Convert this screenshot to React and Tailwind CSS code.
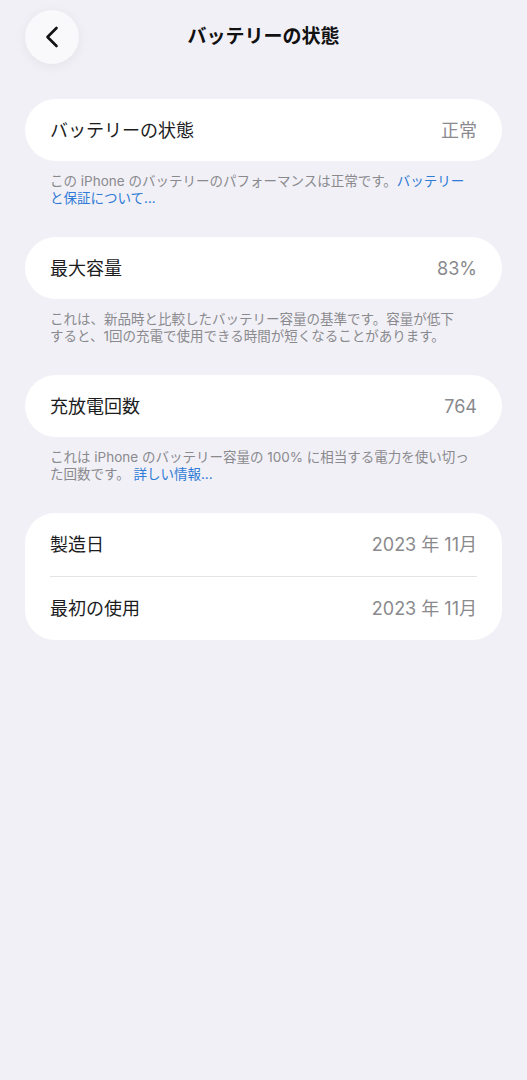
import React from 'react';

const font = { fontFamily: '"Inter", "Noto Sans CJK JP", sans-serif' };

const Card = ({ label, value }) => (
  <div className="h-[62px] bg-white rounded-full flex items-center justify-between px-[25px]">
    <span className="text-[18px] text-[#1c1c1e]">{label}</span>
    <span className="text-[18px] text-[#8a8a8e]">{value}</span>
  </div>
);

const Note = ({ children }) => (
  <div className="pt-[12px] pb-[30px] px-[25px] text-[13.5px] leading-[17px] text-[#8a8a8e]">
    {children}
  </div>
);

const Row = ({ label, value }) => (
  <div className="h-[63px] flex items-center justify-between">
    <span className="text-[18px] text-[#1c1c1e]">{label}</span>
    <span className="text-[18px] text-[#8a8a8e]">{value}</span>
  </div>
);

export default function App() {
  return (
    <div className="min-h-[1080px] w-full bg-[#f1f0f6]" style={font}>
      <div className="relative pt-[10px] px-[25px] h-[64px] flex items-center">
        <button className="w-[54px] h-[54px] rounded-full bg-[#f9f9fb] shadow-[0_2px_12px_rgba(0,0,0,0.06)] flex items-center justify-center">
          <svg width="14" height="22" viewBox="0 0 14 22" fill="none">
            <path d="M11.5 2 L2.5 11 L11.5 20" stroke="#111" strokeWidth="2.6" strokeLinecap="round" strokeLinejoin="round" />
          </svg>
        </button>
        <div className="absolute left-0 right-0 top-[10px] h-[54px] flex items-center justify-center pointer-events-none">
          <span className="text-[19px] font-bold text-[#111]">バッテリーの状態</span>
        </div>
      </div>

      <div className="px-[25px] pt-[35px]">
        <Card label="バッテリーの状態" value="正常" />
        <Note>
          <span className="block whitespace-nowrap">
            この iPhone のバッテリーのパフォーマンスは正常です。<span className="text-[#2f7bd6]">バッテリー</span>
          </span>
          <span className="block whitespace-nowrap text-[#2f7bd6]">と保証について...</span>
        </Note>

        <Card label="最大容量" value="83%" />
        <Note>
          <span className="block whitespace-nowrap">これは、新品時と比較したバッテリー容量の基準です。容量が低下</span>
          <span className="block whitespace-nowrap">すると、1回の充電で使用できる時間が短くなることがあります。</span>
        </Note>

        <Card label="充放電回数" value="764" />
        <Note>
          <span className="block whitespace-nowrap">これは iPhone のバッテリー容量の 100% に相当する電力を使い切っ</span>
          <span className="block whitespace-nowrap">
            た回数です。 <span className="text-[#2f7bd6]">詳しい情報...</span>
          </span>
        </Note>

        <div className="bg-white rounded-[30px] px-[25px]">
          <Row label="製造日" value="2023 年 11月" />
          <div className="h-px bg-[#e3e3e8]" />
          <Row label="最初の使用" value="2023 年 11月" />
        </div>
      </div>
    </div>
  );
}
